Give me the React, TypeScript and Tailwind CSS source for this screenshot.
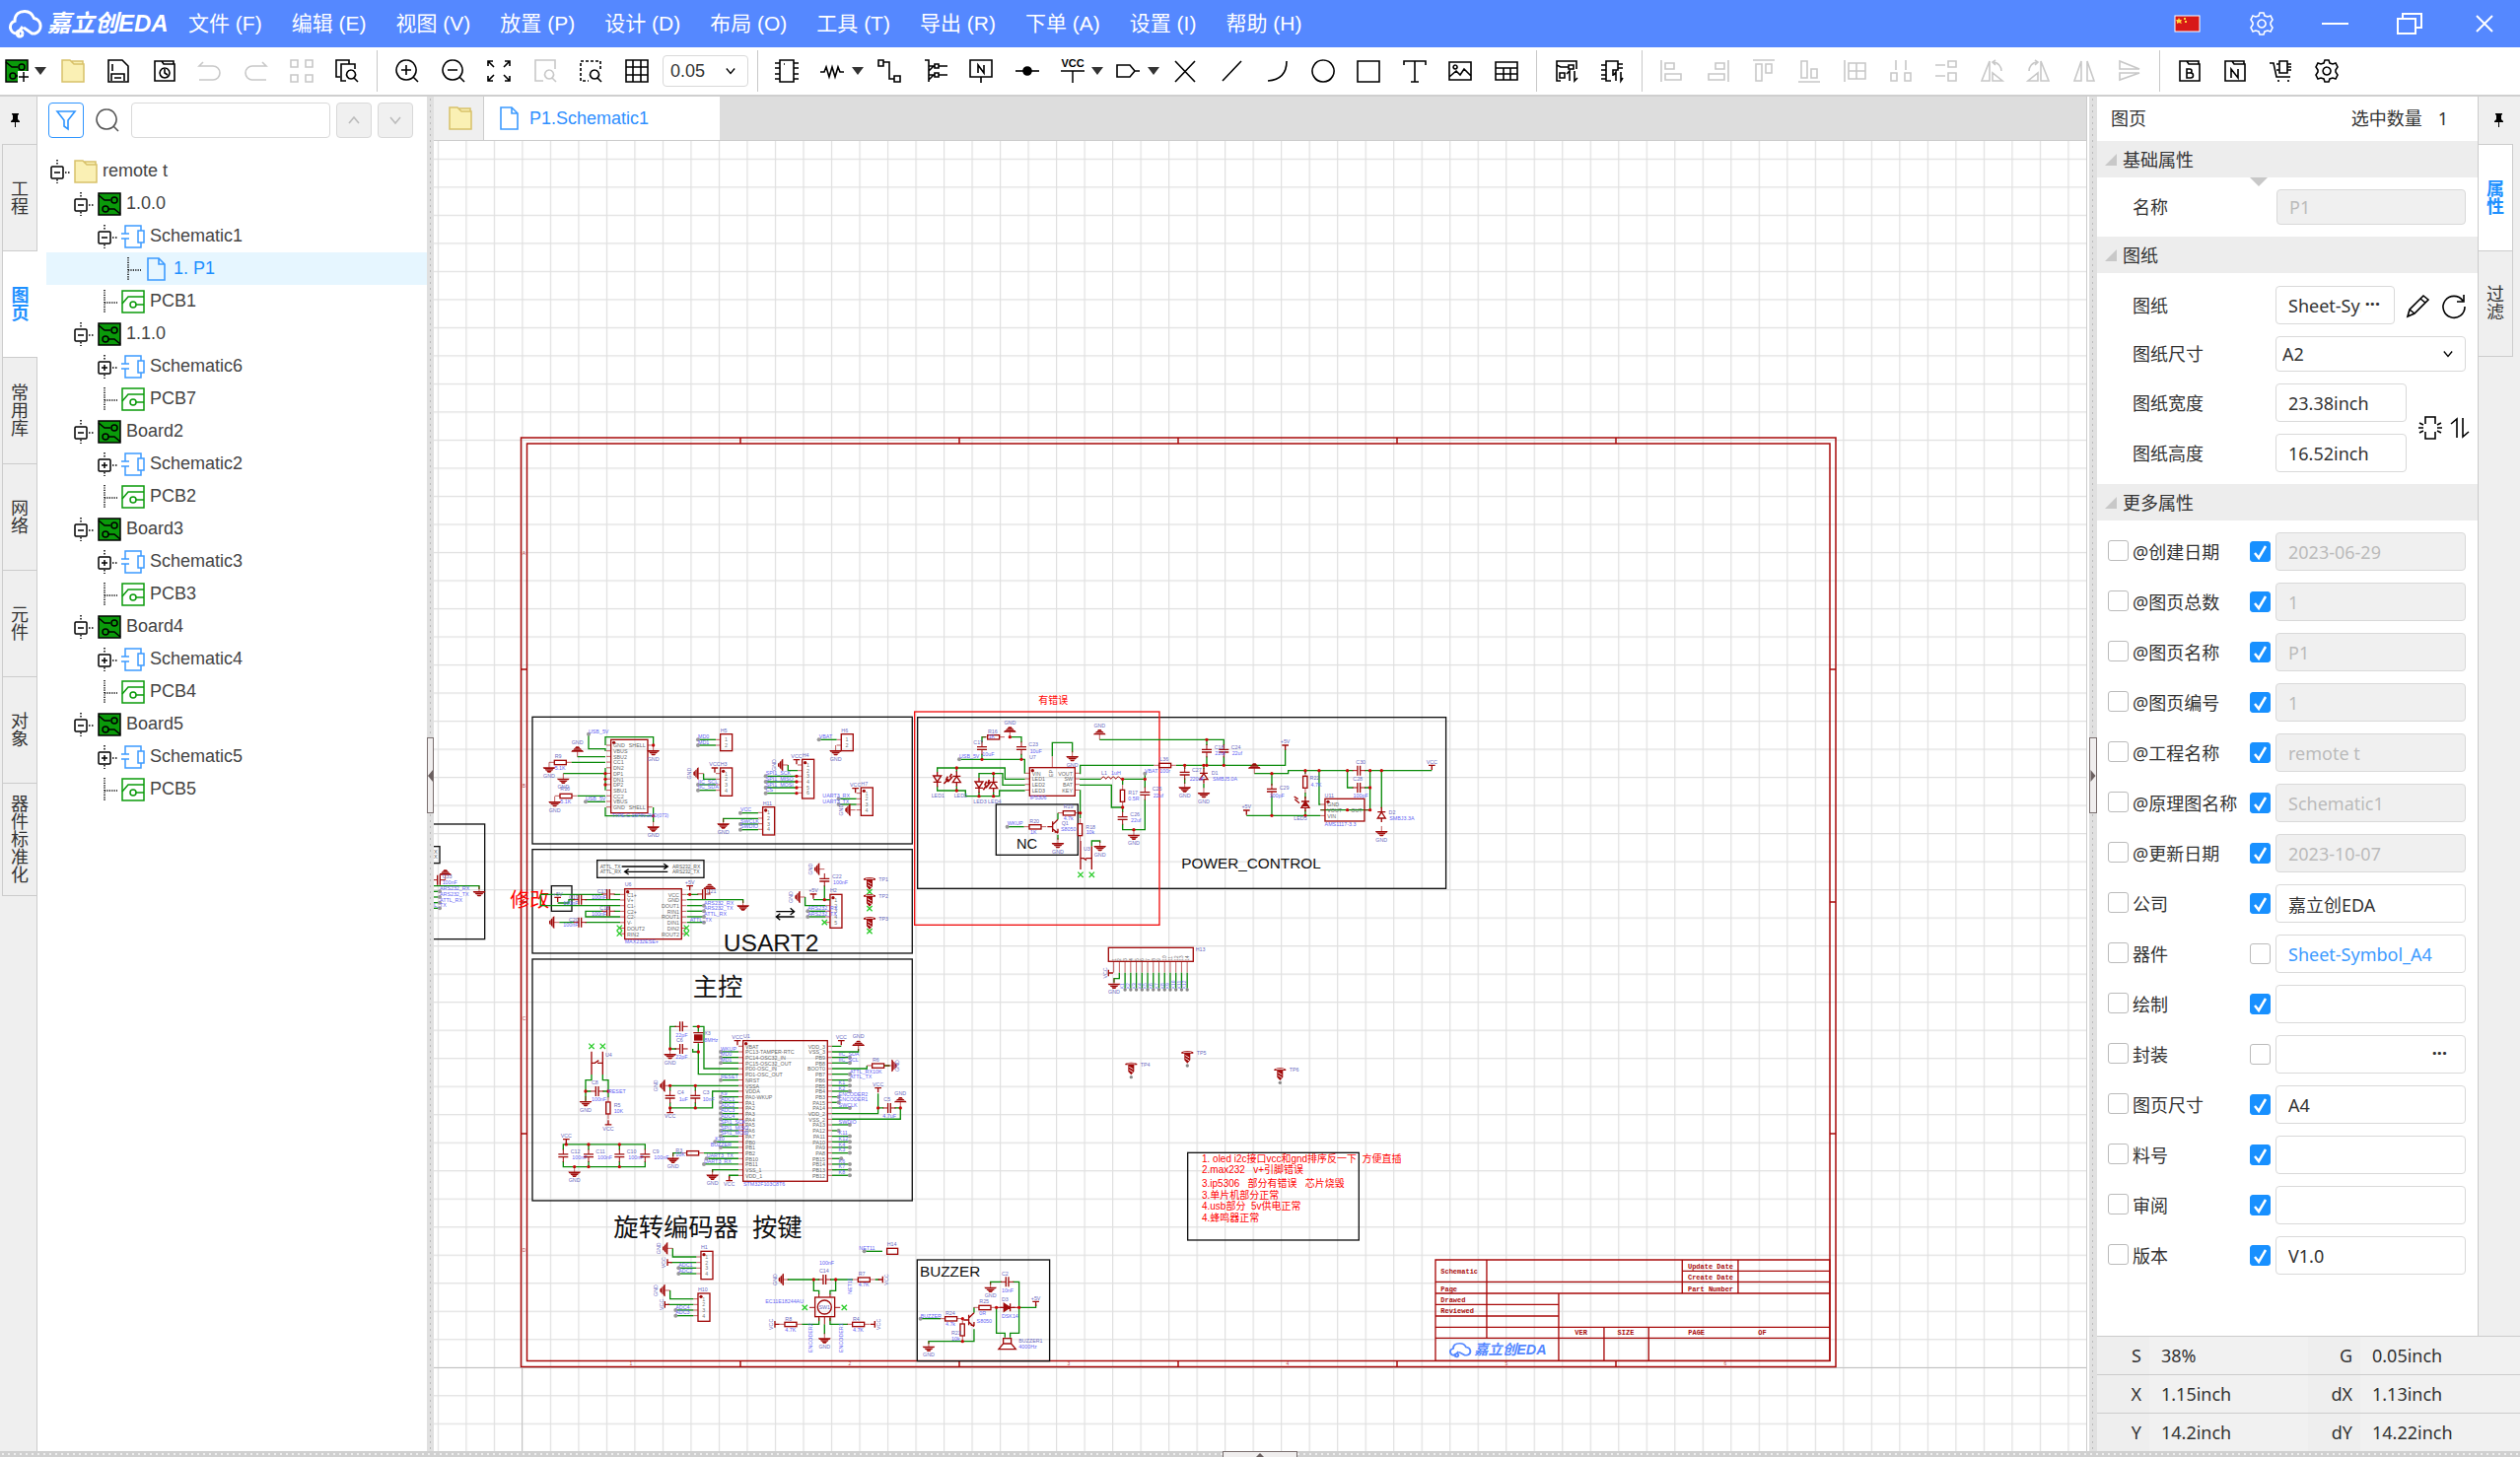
import type { ReactNode } from "react";

const SANS = "font-['Liberation_Sans','Noto_Sans_CJK_SC',sans-serif]";
const UI = "font-['Noto_Sans','Noto_Sans_CJK_SC',sans-serif]";

/* ---------- icons ---------- */

const ICONS: Record<string, string> = {
  save: "M2 1h14l6 6v16H2zM5 22v-7h13v7M6 5v7M8 19h7",
  history: "M2 2h7l2 3h11v17H2zM9 2h12v3M12 9a5 5 0 1 0 .1 0M12 10v4l3 2",
  undo: "M5 3L1 7h14a6.5 6.5 0 0 1 0 14H1",
  redo: "M19 3l4 4H9a6.5 6.5 0 0 0 0 14h14",
  tiles: "M1 1h7v7H1zM16 1h7v7h-7zM1 16h7v7H1zM16 16h7v7h-7z",
  find: "M14 5V1H1v17h4M11 22H6V5h14v5M16 11a4.5 4.5 0 1 0 .1 0M19 19l4 4",
  zoomIn: "M11 1a10 10 0 1 0 .1 0M18 18l5 5M11 6v10M6 11h10",
  zoomOut: "M11 1a10 10 0 1 0 .1 0M18 18l5 5M6 11h10",
  fit: "M1 7V2h5M1 2l6 6M18 2h5v5M23 2l-6 6M1 17v5h5M1 22l6-6M23 17v5h-5M23 22l-6-6",
  findPage: "M22 10V1H2v21h8M16 11a4.5 4.500 0 1 0 .1 0M19 19l4 4",
  grid: "M1 1h22v22H1zM8 1v22M16 1v22M1 8h22M1 16h22",
  chip: "M5 1h14v22H5zM5 4H0M5 9H0M5 15H0M5 20H0M19 4h5M19 9h5M19 15h5M19 20h5M9 5h1",
  resistor: "M0 13h4l2-5 3 10 3-10 3 10 3-10 2 5h4",
  wire: "M1 1h5v6H1zM17 17h6v6h-6zM6 3h6v17h5",
  bus: "M1 1h4v22M5 7h6M5 16h6M15 7h9M15 16h9M11 5h4v4h-4zM11 14h4v4h-4zM5 12l5-5M5 21l5-5",
  netN: "M1 1h22v17H1zM12 18v6M9 14V6l6 8V6",
  cross: "M2 2l20 21M22 2L2 23",
  line: "M3 22L22 2",
  arc: "M22 2c0 12-6 19-19 20",
  circle: "M12 1a11 11 0 1 0 .1 0",
  rect: "M1 2h22v21H1z",
  text: "M1 6V2h22v4M12 2v21M8 23h8",
  image: "M1 3h22v18H1zM1 18l7-6 4 4 4-6 7 7M7 6a2 2 0 1 0 .1 0",
  table: "M1 3h22v18H1zM1 9h22M1 15h22M9 9v12M16 9v12",
  tag: "M1 6h13l5 6-5 6H1zM19 12h5",
  toPcb: "M22 10V2H2v20h4M2 6l4 2h8M14 6h5v4h-5zM5 14h5v5H5zM15 22V12l-3 3M20 12v10l3-3",
  toSch: "M18 4V2H6v20h5M6 6H1M6 11H1M6 16H1M6 20H1M18 5h5M18 9h5M18 2v9h-5v6M16 22V13l-2 3M21 13v9l2-3",
  alignLeft: "M1 1v22M5 4h9v6H5zM5 15h16v6H5z",
  alignRight: "M23 1v22M10 4h9v6h-9zM3 15h16v6H3z",
  alignTop: "M1 1h22M4 5h6v17H4zM14 5h6v9h-6z",
  alignBottom: "M1 23h22M4 2h6v17H4zM14 10h6v9h-6z",
  alignGrid: "M1 1v22M5 4h17v16H5zM13 4v16M5 12h17",
  distH: "M7 1v10M17 1v10M2 14h6v8H2zM16 14h6v8h-6z",
  distV: "M1 6h10M1 17h10M14 2h8v6h-8zM14 14h8v8h-8z",
  rotL: "M9 2v20H1zM12 14v8h10zM12 3c6 0 9 5 9 9M15 1l-3 2 3 3",
  rotR: "M15 2v20h8zM12 14v8H2zM12 3C6 3 3 8 3 12M9 1l3 2-3 3",
  flipH: "M9 2v20H2zM15 2v20h7z",
  flipV: "M2 2v8h20zM2 21v-7h20z",
  folderB: "M2 2h7l2 3h11v17H2zM9 2h12v3M9 10v9h4a2 2 0 0 0 0-5H9h3a2 2 0 0 0 0-4z",
  folderN: "M2 2h7l2 3h11v17H2zM9 2h12v3M8 19v-9l7 9v-9",
  cart: "M0 4h4l3 14h14M10 2h8v12h-8zM10 5H7M10 11H7M18 5h4M18 8h4M18 11h4M9 21v2M19 21v2",
  gear: "M10 1h4l1 3 3 1 3-1 2 4-2 3v2l2 3-2 4-3-1-3 1-1 3h-4l-1-3-3-1-3 1-2-4 2-3v-2L1 8l2-4 3 1 3-1zM12 8a4 4 0 1 0 .1 0",
  filter: "M3 3h18l-7 9v9l-4-3v-6z",
  search: "M11 1a10 10 0 1 0 .1 0M18 18l5 5",
  up: "M7 15l5-6 5 6",
  down: "M7 9l5 6 5-6",
  page: "M3 1h11l6 6v16H3zM14 1v6h6",
  pencil: "M1 23l2-7L17 2l5 4L8 20zM3 16l5 4M14 5l5 4",
  reload: "M22 1v7h-7M21 7A11 11 0 1 0 23 13",
  lock: "M7 8V1h10v7M7 16v7h10v-7M0 12h5M19 12h5M1 7l4 2M1 17l4-2M23 7l-4 2M23 17l-4-2",
  swap: "M3 8l6-5v19M15 2v19l6-5",
};

function Icon({ name, size = "size-6", color = "text-black" }: { name: string; size?: string; color?: string }) {
  return (
    <svg viewBox="0 0 24 24" className={`${size} ${color} shrink-0 overflow-visible`} fill="none" stroke="currentColor" strokeWidth="1.6">
      <path d={ICONS[name]} />
    </svg>
  );
}

function Caret() {
  return (
    <svg viewBox="0 0 12 8" className="w-3 text-[#333]" fill="currentColor">
      <path d="M0 0h12l-6 8z" />
    </svg>
  );
}

function FolderIcon() {
  return (
    <svg viewBox="0 0 24 24" className="size-6 shrink-0" fill="#faf0b4" stroke="#d8c169" strokeWidth="1.5">
      <path d="M1 1h8l4 4h10v18H1zM10 2h12v3H13z" />
    </svg>
  );
}

function BoardIcon({ plus = false }: { plus?: boolean }) {
  return (
    <svg viewBox="0 0 24 24" className="size-6 shrink-0" fill="none" stroke="#000" strokeWidth="1.5">
      <rect x="1" y="1" width="22" height="22" fill="#0a9a0a" />
      <path d="M1 3l6 5h6M11 17h6l6 5" />
      <circle cx="17" cy="8" r="3" />
      <circle cx="8" cy="17" r="3" />
      {plus && <path d="M13 12h11v12H13z" fill="#fff" stroke="none" />}
      {plus && <path d="M19 13v10M14 18h10" />}
    </svg>
  );
}

function SchematicIcon() {
  return (
    <svg viewBox="0 0 24 24" className="size-6 shrink-0" fill="none" stroke="#3d9bff" strokeWidth="1.5">
      <path d="M4 9V1h16v5M4 14v9h16v-5M0 9h8M0 14h8" />
      <rect x="17" y="6" width="6" height="12" />
    </svg>
  );
}

function PcbIcon() {
  return (
    <svg viewBox="0 0 24 24" className="size-6 shrink-0" fill="none" stroke="#0a9a0a" strokeWidth="1.5">
      <rect x="1" y="1" width="22" height="22" />
      <path d="M1 14l6-7h16M15 15h8" />
      <circle cx="12" cy="15" r="3" />
    </svg>
  );
}

function Pin() {
  return (
    <svg viewBox="0 0 12 14" className="h-[14px] w-3" fill="#000">
      <path d="M2 0h7v1l-1 1v4l2 2v1H6v5H5V9H1V8l2-2V2L2 1z" />
    </svg>
  );
}

const CLOUD =
  "M11 24H8a6.5 6.5 0 0 1-2-12.7C6 4 11 1.5 16 1.5c5 0 8 3 9.5 7a8 8 0 0 1 1 15.5h-3L15 18M14 24a3 3 0 1 0 0 .1M11 21l3-4";

/* ---------- title bar and toolbar ---------- */

const menus = [
  "文件 (F)", "编辑 (E)", "视图 (V)", "放置 (P)", "设计 (D)", "布局 (O)",
  "工具 (T)", "导出 (R)", "下单 (A)", "设置 (I)", "帮助 (H)",
];

function TitleBar() {
  return (
    <header className="flex h-12 shrink-0 items-center bg-[#5588ff] pl-2 text-white">
      <svg viewBox="0 0 34 29" className="h-[29px] w-9" fill="none" stroke="currentColor" strokeWidth="3">
        <path d={CLOUD} />
      </svg>
      <span className="ml-1 w-[143px] text-[24px] font-bold whitespace-nowrap italic">嘉立创EDA</span>
      <nav className="flex gap-[30px] text-[21px]">
        {menus.map((menu) => (
          <button key={menu} className="whitespace-nowrap">
            {menu}
          </button>
        ))}
      </nav>
      <div className="ml-auto flex items-center pr-[27px]">
        <button aria-label="language" className="mr-[50px]">
          <svg viewBox="0 0 27 18" className="h-[18px] w-[27px]">
            <rect x="1" y="1" width="25" height="16" fill="#d81818" stroke="#fff" />
            <path d="M5 3l1 2h2L7 7l1 2-3-1-2 1V7L2 5h2zM10 3h2v2h-2zM11 6h2v2h-2z" fill="#ffd83d" />
          </svg>
        </button>
        <button aria-label="settings" className="mr-[49px]">
          <Icon name="gear" color="text-white" />
        </button>
        <button aria-label="minimize" className="mr-[49px] h-5">
          <svg viewBox="0 0 27 20" className="h-5 w-[27px]" stroke="#fff" strokeWidth="2">
            <path d="M0 10h27" />
          </svg>
        </button>
        <button aria-label="restore" className="mr-[54px]">
          <svg viewBox="0 0 26 22" className="h-[22px] w-[26px]" fill="none" stroke="#fff" strokeWidth="2">
            <path d="M1 6h18v15H1zM6 6V1h19v14h-6" />
          </svg>
        </button>
        <button aria-label="close">
          <svg viewBox="0 0 18 18" className="size-[18px]" stroke="#fff" strokeWidth="2">
            <path d="M1 1l16 16M17 1L1 17" />
          </svg>
        </button>
      </div>
    </header>
  );
}

function Tool({ name, disabled = false }: { name: string; disabled?: boolean }) {
  return (
    <button aria-label={name} disabled={disabled}>
      <Icon name={name} color={disabled ? "text-[#c8c8c8]" : "text-black"} />
    </button>
  );
}

function Tools({ names, className, disabled }: { names: string[]; className: string; disabled?: boolean }) {
  return (
    <div className={`flex shrink-0 justify-between ${className}`}>
      {names.map((name) => (
        <Tool key={name} name={name} disabled={disabled} />
      ))}
    </div>
  );
}

function Separator() {
  return <div className="mx-[18px] h-[42px] w-px shrink-0 bg-[#c8c8c8]" />;
}

function Toolbar() {
  return (
    <div className="flex h-[50px] shrink-0 items-center border-b-2 border-[#cfcfcf] bg-white pl-[5px]">
      <button aria-label="new" className="flex items-center gap-[6px]">
        <BoardIcon plus />
        <Caret />
      </button>
      <div className="ml-[15px] flex w-[302px] shrink-0 justify-between">
        <button aria-label="open">
          <FolderIcon />
        </button>
        <Tool name="save" />
        <Tool name="history" />
        <Tool name="undo" disabled />
        <Tool name="redo" disabled />
        <Tool name="tiles" disabled />
        <Tool name="find" />
      </div>
      <Separator />
      <div className="flex w-[257px] shrink-0 justify-between">
        <Tool name="zoomIn" />
        <Tool name="zoomOut" />
        <Tool name="fit" />
        <Tool name="findPage" disabled />
        <button aria-label="find area">
          <svg viewBox="0 0 24 24" className="size-6" fill="none" stroke="#000" strokeWidth="1.6">
            <path d="M22 10V2H2v20h8" strokeDasharray="3 2" />
            <path d="M16 11a4.5 4.5 0 1 0 .1 0M19 19l4 4" />
          </svg>
        </button>
        <Tool name="grid" />
      </div>
      <div className="ml-[14px] grid shrink-0 items-center">
        <select
          aria-label="grid size"
          className="col-start-1 row-start-1 h-8 w-[87px] appearance-none rounded-sm border border-[#d9d9d9] pl-[7px] text-lg leading-none text-[#333]"
        >
          <option>0.05</option>
        </select>
        <div className="pointer-events-none col-start-1 row-start-1 mr-2 justify-self-end">
          <Icon name="down" size="size-5" />
        </div>
      </div>
      <div className="mr-[17px] ml-[9px] h-[42px] w-px shrink-0 bg-[#c8c8c8]" />
      <Tools names={["chip", "resistor"]} className="mr-2 w-[70px]" />
      <Caret />
      <div className="mr-[7px] ml-[14px] flex w-[210px] shrink-0 justify-between">
        <Tool name="wire" />
        <Tool name="bus" />
        <Tool name="netN" />
        <button aria-label="junction">
          <svg viewBox="0 0 24 24" className="size-6" stroke="#000" strokeWidth="1.6">
            <path d="M0 12h24" />
            <circle cx="12" cy="12" r="4" />
          </svg>
        </button>
        <button aria-label="power">
          <svg viewBox="0 0 24 24" className="size-6 overflow-visible" stroke="#000" strokeWidth="1.5">
            <path d="M0 12h24M12 12v12" />
            <text x="12" y="8" textAnchor="middle" className="text-[11px] font-bold" stroke="none">VCC</text>
          </svg>
        </button>
      </div>
      <Caret />
      <div className="mr-2 ml-[13px] flex">
        <Tool name="tag" />
      </div>
      <Caret />
      <Tools
        names={["cross", "line", "arc", "circle", "rect", "text", "image", "table"]}
        className="ml-[14px] w-[350px]"
      />
      <Separator />
      <Tools names={["toPcb", "toSch"]} className="w-[70px]" />
      <Separator />
      <Tools
        names={[
          "alignLeft", "alignRight", "alignTop", "alignBottom", "alignGrid", "distH", "distV", "rotL", "rotR", "flipH", "flipV",
        ]}
        className="w-[488px]"
        disabled
      />
      <Separator />
      <Tools names={["folderB", "folderN", "cart", "gear"]} className="w-[163px]" />
    </div>
  );
}

/* ---------- left side ---------- */

const leftTabs = ["工程", "图页", "常用库", "网络", "元件", "对象", "器件标准化"];

function LeftTabs() {
  return (
    <div className="flex w-[38px] shrink-0 flex-col bg-[#efefef]">
      <div className="flex h-12 items-center justify-center border-r border-[#ccc] pr-[6px]">
        <Pin />
      </div>
      <div className="ml-[2px] flex flex-col">
        {leftTabs.map((tab) => (
          <button
            key={tab}
            className={`flex h-[108px] items-center justify-center border-t border-l border-[#ccc] text-lg leading-[18px] last:h-[115px] last:border-b ${
              tab === "图页" ? "bg-white font-bold text-[#1e90ff]" : "border-r text-[#333]"
            }`}
          >
            <span className="w-[18px] break-all">{tab}</span>
          </button>
        ))}
      </div>
      <div className="flex-1 border-r border-[#ccc]" />
    </div>
  );
}

type Row = { level: number; kind: "folder" | "board" | "sch" | "page" | "pcb"; name: string; open?: boolean };

const tree: Row[] = [
  { level: 0, kind: "folder", name: "remote t", open: true },
  { level: 1, kind: "board", name: "1.0.0", open: true },
  { level: 2, kind: "sch", name: "Schematic1", open: true },
  { level: 3, kind: "page", name: "1. P1" },
  { level: 2, kind: "pcb", name: "PCB1" },
  { level: 1, kind: "board", name: "1.1.0", open: true },
  { level: 2, kind: "sch", name: "Schematic6", open: false },
  { level: 2, kind: "pcb", name: "PCB7" },
  { level: 1, kind: "board", name: "Board2", open: true },
  { level: 2, kind: "sch", name: "Schematic2", open: false },
  { level: 2, kind: "pcb", name: "PCB2" },
  { level: 1, kind: "board", name: "Board3", open: true },
  { level: 2, kind: "sch", name: "Schematic3", open: false },
  { level: 2, kind: "pcb", name: "PCB3" },
  { level: 1, kind: "board", name: "Board4", open: true },
  { level: 2, kind: "sch", name: "Schematic4", open: false },
  { level: 2, kind: "pcb", name: "PCB4" },
  { level: 1, kind: "board", name: "Board5", open: true },
  { level: 2, kind: "sch", name: "Schematic5", open: false },
  { level: 2, kind: "pcb", name: "PCB5" },
];

const indents = ["pl-0", "pl-6", "pl-12", "pl-18"];

function Toggle({ open }: { open?: boolean }) {
  return (
    <svg viewBox="0 0 24 24" className="size-6 shrink-0" fill="none" stroke="#000" strokeWidth="1.5">
      {open === undefined ? (
        <path d="M11 0v24M11 13h13" strokeDasharray="1.2 1.2" />
      ) : (
        <>
          <path d="M11 0v5M11 20v4M19 13h6" strokeDasharray="1.5 1.5" />
          <rect x="5" y="7" width="12" height="12" rx="1" />
          <path d={open ? "M8 13h6" : "M8 13h6M11 10v6"} />
        </>
      )}
    </svg>
  );
}

function TreeRow({ row }: { row: Row }) {
  const active = row.kind === "page";
  return (
    <li className={active ? "bg-[#e6f6ff]" : ""}>
      <button className={`flex h-[33px] items-center ${indents[row.level]}`}>
        <Toggle open={row.open} />
        <span className="mr-[5px] ml-1 flex w-6 justify-center">
          {row.kind === "folder" && <FolderIcon />}
          {row.kind === "board" && <BoardIcon />}
          {row.kind === "sch" && <SchematicIcon />}
          {row.kind === "pcb" && <PcbIcon />}
          {row.kind === "page" && <Icon name="page" color="text-[#3d9bff]" />}
        </span>
        <span className={`pb-[2px] text-lg ${active ? "text-[#1e90ff]" : "text-[#444]"}`}>{row.name}</span>
      </button>
    </li>
  );
}

function ProjectPanel() {
  return (
    <aside className="w-[395px] shrink-0 bg-white">
      <div className="flex items-center pt-[6px] pr-[14px] pl-[11px]">
        <button aria-label="filter" className="flex size-9 items-center justify-center rounded-sm border border-[#2f95ff]">
          <Icon name="filter" color="text-[#2f95ff]" />
        </button>
        <div className="mx-3">
          <Icon name="search" color="text-[#555]" />
        </div>
        <input aria-label="search" className="h-9 min-w-0 flex-1 rounded-sm border border-[#d9d9d9]" />
        <button aria-label="previous" className="ml-[6px] flex size-9 items-center justify-center rounded-sm border border-[#d9d9d9] bg-[#f0f0f0]">
          <Icon name="up" color="text-[#bbb]" />
        </button>
        <button aria-label="next" className="ml-[6px] flex size-9 items-center justify-center rounded-sm border border-[#d9d9d9] bg-[#f0f0f0]">
          <Icon name="down" color="text-[#bbb]" />
        </button>
      </div>
      <ul className="mt-[17px] ml-[9px]">
        {tree.map((row) => (
          <TreeRow key={row.name} row={row} />
        ))}
      </ul>
    </aside>
  );
}

function Splitter({ side }: { side: "left" | "right" }) {
  return (
    <div
      className={`flex shrink-0 flex-col items-center bg-[#e0e0e0] bg-[radial-gradient(#bbb_1px,transparent_1px)] bg-[size:7px_6px] pt-[650px] ${
        side === "left" ? "w-[7px]" : "w-2"
      }`}
    >
      <button aria-label="collapse panel" className="flex h-[77px] w-full items-center border border-[#7a6f6f] bg-[#f0eeee]">
        <svg viewBox="0 0 5 12" className="h-3 w-full" fill="#6b6060">
          <path d={side === "left" ? "M5 0v12L0 6z" : "M0 0v12l5-6z"} />
        </svg>
      </button>
    </div>
  );
}

/* ---------- schematic symbols, drawn at three units per pixel ---------- */

const RED = "#a00a0a";
const GREEN = "#0a8a0a";
const NET = "#6464f4";
const REF = "#6a6abf";

type Pos = { x: number; y: number };

function T({ x, y, s, c = REF, size = 16, a = "start", r = 0 }: Pos & { s: string; c?: string; size?: number; a?: "start" | "middle" | "end"; r?: number }) {
  return (
    <text x={x} y={y} fill={c} fontSize={size} textAnchor={a} transform={r ? `rotate(${r} ${x} ${y})` : undefined}>
      {s}
    </text>
  );
}

function Wire({ d, c = GREEN, w = 4 }: { d: string; c?: string; w?: number }) {
  return <path d={d} fill="none" stroke={c} strokeWidth={w} />;
}

function Gnd({ x, y, r = 0, label = true }: Pos & { r?: number; label?: boolean }) {
  const at = { 0: [0, 47], 90: [-37, 0], 180: [0, -38], 270: [37, 0] }[r] ?? [0, 47];
  return (
    <g>
      <g transform={`translate(${x} ${y}) rotate(${r})`}>
        <Wire d="M0 0v16" c={RED} w={2} />
        <path d="M-19 15h38l-3 5h-32zM-13 21h26l-3 4h-20zM-8 26h16l-4 5h-8z" fill={RED} />
      </g>
      {label && <T x={x + at[0]} y={y + at[1]} s="GND" a="middle" r={r % 180 ? 270 : 0} />}
    </g>
  );
}

function Vcc({ x, y, s = "VCC", r = 0 }: Pos & { s?: string; r?: number }) {
  const at = { 0: [0, -19], 90: [31, 0], 180: [0, 31], 270: [-19, 0] }[r] ?? [0, -19];
  return (
    <g>
      <g transform={`translate(${x} ${y}) rotate(${r})`}>
        <Wire d="M0 0v-14M-10 -14h20" c={RED} w={4} />
      </g>
      <T x={x + at[0]} y={y + at[1]} s={s} a="middle" r={r % 180 ? 270 : 0} />
    </g>
  );
}

function Res({ x, y, r = 0 }: Pos & { r?: number }) {
  return (
    <g transform={`translate(${x} ${y}) rotate(${r})`}>
      <Wire d="M-34 0h16M18 0h16" c={RED} w={2} />
      <rect x="-18" y="-6" width="36" height="13" fill="none" stroke={RED} strokeWidth="4" />
    </g>
  );
}

/* plates are horizontal unless rotated */
function Cap({ x, y, r = 0 }: Pos & { r?: number }) {
  return (
    <g transform={`translate(${x} ${y}) rotate(${r})`}>
      <Wire d="M0 -20v16M0 4v16" c={RED} w={3} />
      <Wire d="M-15 -4h30M-15 4h30" c={RED} w={4} />
    </g>
  );
}

function Led({ x, y, r = 0 }: Pos & { r?: number }) {
  return (
    <g transform={`translate(${x} ${y}) rotate(${r})`} fill="none" stroke={RED} strokeWidth="4">
      <path d="M0 -22v12M0 8v16M-12 -10h24L0 8zM-12 9h24" />
    </g>
  );
}

function Npn({ x, y }: Pos) {
  return <Wire d={`M${x - 16} ${y}h14M${x} ${y - 16}v32M${x} ${y - 6}l16-16M${x} ${y + 6}l16 14M${x + 6} ${y + 16}h10v-10`} c={RED} />;
}

function Dots({ at, c = "#c80a0a", r = 5 }: { at: number[][]; c?: string; r?: number }) {
  return (
    <>
      {at.map(([x, y]) => (
        <circle key={`${x}-${y}`} cx={x} cy={y} r={r} fill={c} />
      ))}
    </>
  );
}

function Open({ x, y }: Pos) {
  return <Wire d={`M${x - 8} ${y - 8}l16 16M${x + 8} ${y - 8}l-16 16`} c="#2ccc2c" />;
}

type NetRow = [x: number, y: number, to: number, name: string];

function Nets({ rows }: { rows: NetRow[] }) {
  return (
    <>
      {rows.map(([x, y, to, name]) => (
        <g key={`${x}-${y}`}>
          <Wire d={`M${x} ${y}H${to}`} />
          <circle cx={x} cy={y} r="6" fill="#999" />
          <T x={to > x ? x : x - 34} y={y - 4} s={name} c={NET} />
        </g>
      ))}
    </>
  );
}

function Header({ x, y, n, name }: Pos & { n: number; name: string }) {
  return (
    <g>
      <rect x={x} y={y} width="36" height={n * 17 + 17} fill="none" stroke={RED} strokeWidth="4" />
      {Array.from({ length: n }, (_, i) => (
        <g key={i}>
          <Wire d={`M${x - 14} ${y + 17 + i * 17}h14`} c={RED} w={2} />
          <T x={x + 13} y={y + 23 + i * 17} s={`${i + 1}`} c="#777" />
        </g>
      ))}
      {n > 2 && <circle cx={x + 9} cy={y + 10} r="5" fill={RED} />}
      <T x={x} y={y - 6} s={name} />
    </g>
  );
}

type ChipProps = Pos & { w: number; h: number; top?: number; left: string[]; right: string[] };

function Chip({ x, y, w, h, top = 17, left, right }: ChipProps) {
  const rowY = (i: number) => y + top + i * 17.1;
  return (
    <g>
      <rect x={x} y={y} width={w} height={h} fill="none" stroke={RED} strokeWidth="4" />
      <circle cx={x + 9} cy={y + 9} r="5" fill={RED} />
      {left.map((pin, i) =>
        pin ? (
          <g key={i}>
            <Wire d={`M${x - 14} ${rowY(i)}h14`} c={RED} w={2} />
            <T x={x + 7} y={rowY(i) + 7} s={pin} c="#666" />
          </g>
        ) : null,
      )}
      {right.map((pin, i) =>
        pin ? (
          <g key={i}>
            <Wire d={`M${x + w} ${rowY(i)}h14`} c={RED} w={2} />
            <T x={x + w - 7} y={rowY(i) + 7} s={pin} c="#666" a="end" />
          </g>
        ) : null,
      )}
    </g>
  );
}

function TestPoint({ x, y, name, open = false }: Pos & { name: string; open?: boolean }) {
  return (
    <g>
      <path d={`M${x - 18} ${y - 12}q18 -8 36 0v4h-9v20l-9 10l-9 -10v-20h-9z`} fill={RED} />
      <Wire d={`M${x - 6} ${y - 2}l12 7M${x - 6} ${y + 7}l12 7M${x - 12} ${y - 12}h24`} c="#f4dada" w={3} />
      {open ? <Open x={x} y={y + 28} /> : <circle cx={x} cy={y + 29} r="5" fill="#888" />}
      <T x={x + 28} y={y - 4} s={name} />
    </g>
  );
}

function Frame({ x, y, w, h, c = "#111" }: Pos & { w: number; h: number; c?: string }) {
  return <rect x={x} y={y} width={w} height={h} fill="none" stroke={c} strokeWidth="4" />;
}

function UsbBlock() {
  return (
    <g>
      <Frame x={330} y={82} w={1156} h={386} />
      <Chip
        x={569} y={151} w={112} h={223}
        left={["GND", "VBUS", "SBU2", "CC1", "DN2", "DP1", "DN1", "DP2", "SBU1", "CC2", "VBUS", "GND"]}
        right={["SHELL", "", "", "", "", "", "", "", "", "", "", "SHELL"]}
      />
      <Wire d="M501 134V179H552V186M552 168V143H698V168M467 203H552M449 220H552M424 254H552M552 237V305M467 322H552M552 357V383H698V357M698 383V402" />
      <Dots at={[[552, 254], [552, 271], [552, 288], [698, 168], [698, 383]]} />
      <Nets rows={[[492, 340, 552, "USB_5V"]]} />
      <Dots at={[[501, 134]]} c="#999" r={6} />
      <T x={501} y={132} s="USB_5V" c={NET} />
      <T x={572} y={387} s="TYPE-C-16PIN-2MD(073)" c={NET} size={15} />
      <Gnd x={467} y={203} r={180} />
      <Gnd x={381} y={220} />
      <Gnd x={424} y={254} />
      <Gnd x={398} y={324} />
      <Gnd x={698} y={168} />
      <Gnd x={698} y={400} />
      <Res x={415} y={220} />
      <Res x={432} y={322} />
      <T x={398} y={208} s="R9" />
      <T x={398} y={243} s="5.1K" c={NET} />
      <T x={415} y={306} s="R10" />
      <T x={415} y={345} s="5.1K" c={NET} />
      <Header x={902} y={134} n={2} name="H5" />
      <Nets rows={[[834, 151, 888, "MD0"], [834, 168, 888, "MD1"]]} />
      <Header x={902} y={237} n={4} name="H3" />
      <Nets rows={[[834, 288, 888, "IIC_SCL"], [834, 305, 888, "IIC_SDA"]]} />
      <Wire d="M851 254V271H888" />
      <Gnd x={851} y={254} r={90} />
      <Vcc x={885} y={251} />
      <Header x={1151} y={211} n={6} name="H4" />
      <Nets rows={[[1040, 262, 1137, "SPI1_SCK"], [1040, 279, 1137, "SPI1_MISO"], [1040, 297, 1137, "SPI1_MOSI"], [1040, 314, 1137, "CS"]]} />
      <Dots at={[[1134, 262], [1134, 279], [1134, 297], [1134, 314]]} />
      <Wire d="M1108 228V245H1137" />
      <Gnd x={1108} y={228} r={90} />
      <Vcc x={1134} y={226} />
      <Header x={1270} y={134} n={2} name="H6" />
      <Nets rows={[[1202, 151, 1256, "VBAT"]]} />
      <Gnd x={1253} y={168} />
      <Header x={1330} y={297} n={4} name="H7" />
      <Nets rows={[[1262, 331, 1316, ""], [1262, 348, 1316, ""]]} />
      <T x={1213} y={327} s="UART3_RX" c={NET} />
      <T x={1213} y={344} s="UART3_TX" c={NET} />
      <Gnd x={1313} y={365} r={90} />
      <Vcc x={1313} y={313} />
      <Header x={1031} y={356} n={4} name="H11" />
      <Nets rows={[[963, 374, 1017, "VCC"], [963, 408, 1017, "SWCLK"], [963, 425, 1017, "SWDIO"]]} />
      <Wire d="M911 402V391H1017" />
      <Gnd x={911} y={391} />
    </g>
  );
}

function UsartBlock() {
  return (
    <g>
      <Frame x={330} y={485} w={1156} h={316} />
      <Frame x={527} y={518} w={325} h={53} />
      <T x={536} y={543} s="ATTL_TX" c="#555" size={15} />
      <T x={536} y={558} s="ATTL_RX" c="#555" size={15} />
      <T x={756} y={543} s="ARS232_RX" c="#555" size={15} />
      <T x={756} y={558} s="ARS232_TX" c="#555" size={15} />
      <Wire d="M602 537H742M730 529l12 8l-12 8M742 553H611M623 545l-12 8l12 8" c="#000" />
      <Wire d="M1072 674H1127M1115 664l12 10l-12 10M1127 690H1072M1084 680l-12 10l12 10" c="#000" />
      <Frame x={388} y={596} w={62} h={77} />
      <T x={262} y={660} s="修改" c="#f00" size={60} />
      <Chip
        x={611} y={605} w={173} h={153}
        left={["C1+", "V+", "C1-", "C2+", "C2-", "V-", "DOUT2", "RIN2"]}
        right={["VCC", "GND", "DOUT1", "RIN1", "ROUT1", "DIN1", "DIN2", "ROUT2"]}
      />
      <T x={611} y={596} s="U6" />
      <T x={611} y={770} s="MAX232ESE+" c={NET} />
      <Wire d="M355 622H545M355 622V656H597M578 622H597M407 648H441V638H458M490 638H597M578 673H597M545 673H492V690H597M412 707H458M490 707H597M800 622H835M800 638H971V648" />
      <Cap x={561} y={621} r={90} />
      <Cap x={475} y={638} r={90} />
      <Cap x={561} y={673} r={90} />
      <Cap x={475} y={707} r={90} />
      <Cap x={852} y={621} r={90} />
      <T x={527} y={617} s="C17" />
      <T x={510} y={636} s="100nF" c={NET} />
      <T x={441} y={636} s="C19" />
      <T x={424} y={653} s="100nF" c={NET} />
      <T x={535} y={669} s="C18" />
      <T x={510} y={687} s="100nF" c={NET} />
      <T x={441} y={705} s="C20" />
      <T x={424} y={720} s="100nF" c={NET} />
      <T x={860} y={617} s="C21" />
      <Gnd x={412} y={707} r={90} label={false} />
      <Gnd x={869} y={621} r={180} label={false} />
      <Gnd x={971} y={640} label={false} />
      <Vcc x={407} y={645} s="+5V" />
      <Vcc x={809} y={610} s="+5V" />
      <Dots at={[[809, 622]]} />
      <Nets rows={[[852, 656, 800, ""], [852, 673, 800, ""], [852, 690, 800, ""], [852, 707, 800, ""]]} />
      <T x={852} y={655} s="ARS232_RX" c={NET} />
      <T x={852} y={669} s="ARS232_TX" c={NET} />
      <T x={852} y={687} s="ATTL_RX" c={NET} />
      <T x={809} y={705} s="ATTL_TX" c={NET} />
      <Open x={595} y={724} />
      <Open x={595} y={741} />
      <Open x={799} y={724} />
      <Open x={799} y={741} />
      <Header x={1236} y={622} n={5} name="H2" />
      <Wire d="M1219 595V638H1236M1160 630V656H1222M1185 638H1219" />
      <Dots at={[[1219, 638]]} />
      <Cap x={1219} y={578} />
      <T x={1242} y={572} s="C22" />
      <T x={1245} y={592} s="100nF" c={NET} />
      <Gnd x={1219} y={545} r={90} />
      <Gnd x={1160} y={630} r={90} />
      <Vcc x={1185} y={635} s="+5V" />
      <Nets rows={[[1168, 673, 1222, "ARS232_RX"], [1168, 690, 1222, "ARS232_TX"]]} />
      <Open x={1219} y={707} />
      <TestPoint x={1356} y={586} name="TP1" open />
      <TestPoint x={1356} y={637} name="TP2" open />
      <TestPoint x={1356} y={706} name="TP3" open />
      <T x={911} y={794} s="USART2" c="#111" size={74} />
    </g>
  );
}

const leftNets: NetRow[] = [
  [903, 1101, 957, "WKUP"], [903, 1118, 957, "MD0"], [903, 1135, 957, "MD1"], [903, 1187, 957, "RESET"],
  [903, 1238, 957, "K9"], [903, 1255, 957, "ADC1"], [903, 1272, 957, "ADC2"], [903, 1289, 957, "ADC3"],
  [903, 1306, 957, "ADC4"], [903, 1323, 957, "SPI1_SCK"], [903, 1341, 957, "SPI1_MISO"], [903, 1358, 957, "SPI1_MOSI"],
  [886, 1375, 957, "K10"], [903, 1392, 957, ""], [860, 1426, 957, "UART3_TX"], [852, 1443, 957, "UART3_RX"],
];

const rightNets: NetRow[] = [
  [1296, 1118, 1242, "IIC_SDA"], [1296, 1135, 1242, "IIC_SCL"], [1296, 1169, 1242, ""], [1296, 1187, 1242, ""],
  [1296, 1204, 1242, "K1"], [1296, 1221, 1242, "K2"], [1262, 1238, 1242, ""], [1262, 1255, 1242, ""],
  [1296, 1272, 1242, "SWCLK"], [1296, 1323, 1242, "SWDIO"], [1262, 1341, 1242, ""], [1296, 1358, 1242, "K11"],
  [1296, 1375, 1242, "K12"], [1296, 1392, 1242, "K4"], [1296, 1409, 1242, "K3"], [1270, 1426, 1242, ""],
  [1296, 1443, 1242, "K6"], [1296, 1460, 1242, "K7"], [1296, 1477, 1242, "K8"],
];

function McuBlock() {
  return (
    <g>
      <Frame x={330} y={819} w={1156} h={735} />
      <T x={818} y={931} s="主控" c="#111" size={76} />
      <Chip
        x={971} y={1067} w={257} h={428}
        left={[
          "VBAT", "PC13-TAMPER-RTC", "PC14-OSC32_IN", "PC15-OSC32_OUT", "PD0-OSC_IN", "PD1-OSC_OUT", "NRST", "VSSA",
          "VDDA", "PA0-WKUP", "PA1", "PA2", "PA3", "PA4", "PA5", "PA6", "PA7", "PB0", "PB1", "PB2", "PB10", "PB11", "VSS_1", "VDD_1",
        ]}
        right={[
          "VDD_3", "VSS_3", "PB9", "PB8", "BOOT0", "PB7", "PB6", "PB5", "PB4", "PB3", "PA15", "PA14", "VDD_2", "VSS_2",
          "PA13", "PA12", "PA11", "PA10", "PA9", "PA8", "PB15", "PB14", "PB13", "PB12",
        ]}
      />
      <T x={972} y={1058} s="U1" />
      <T x={972} y={1508} s="STM32F103C8T6" c={NET} />
      <Nets rows={leftNets} />
      <Nets rows={rightNets} />
      <T x={872} y={1389} s="BUZZER" c={NET} />
      <T x={1296} y={1166} s="ATTL_RX" c={NET} />
      <T x={1296} y={1182} s="ATTL_TX" c={NET} />
      <T x={1262} y={1236} s="ENCODER2" c={NET} />
      <T x={1262} y={1250} s="ENCODER1" c={NET} />
      <Vcc x={954} y={1081} />
      <Vcc x={1270} y={1081} />
      <Wire d="M1242 1084H1270M1242 1101H1322V1092M1242 1152H1348V1143M1400 1143H1418" />
      <Gnd x={1322} y={1098} r={180} />
      <Res x={1382} y={1143} />
      <T x={1365} y={1131} s="R6" />
      <T x={1365} y={1166} s="10K" c={NET} />
      <Gnd x={1408} y={1143} r={270} />
      <Wire d="M1242 1289H1382V1228M1242 1306H1450V1272M1382 1272H1399M1432 1272H1450" />
      <Cap x={1416} y={1272} r={90} />
      <Vcc x={1382} y={1225} />
      <Gnd x={1450} y={1270} r={180} />
      <T x={1399} y={1250} s="C5" />
      <T x={1396} y={1302} s="4.7uF" c={NET} />
      <Dots at={[[1382, 1272], [1450, 1272]]} />

      <Wire d="M749 1092V1024H768M818 1024H852V1152H957M749 1092H768M818 1092V1101H835V1169H957M835 1101V1075M835 1024V1040" />
      <Cap x={783} y={1024} r={90} />
      <Cap x={783} y={1092} r={90} />
      <rect x="822" y="1048" width="26" height="19" fill={RED} />
      <Wire d="M820 1043h30M820 1072h30" c={RED} />
      <Dots at={[[835, 1024], [749, 1092], [835, 1101]]} />
      <T x={766} y={1056} s="22pF" c={NET} />
      <T x={768} y={1071} s="C6" />
      <T x={766} y={1122} s="22pF" c={NET} />
      <T x={853} y={1050} s="X3" />
      <T x={853} y={1071} s="8MHz" c={NET} />
      <Gnd x={749} y={1092} />

      <Wire d="M749 1204H957M749 1220V1204M826 1204V1220M749 1255V1272H878V1221H957M826 1255V1272" />
      <Cap x={749} y={1238} />
      <Cap x={826} y={1238} />
      <Dots at={[[749, 1204], [826, 1204], [749, 1272], [826, 1272]]} />
      <Gnd x={749} y={1204} r={90} />
      <Vcc x={749} y={1272} r={180} />
      <T x={771} y={1229} s="C4" />
      <T x={776} y={1250} s="1uF" c={NET} />
      <T x={848} y={1229} s="C3" />
      <T x={848} y={1250} s="10nF" c={NET} />

      <Res x={818} y={1409} />
      <Wire d="M758 1419V1409H784M852 1409H957M878 1468V1460H957M929 1485V1477H957" />
      <T x={766} y={1407} s="R3" />
      <T x={766} y={1419} s="10K" c={NET} />
      <Gnd x={758} y={1409} />
      <Gnd x={878} y={1460} />
      <Vcc x={929} y={1479} r={180} />

      <Open x={510} y={1084} />
      <Open x={544} y={1084} />
      <Wire d="M510 1100V1170M544 1100V1170M510 1135h10l12-8M528 1135h16" c={RED} />
      <Wire d="M510 1170V1187H492V1250M544 1170V1187H561V1240M492 1221H508M544 1221H561" />
      <Cap x={527} y={1221} r={90} />
      <Res x={561} y={1272} r={90} />
      <Gnd x={492} y={1236} />
      <Vcc x={561} y={1309} r={180} />
      <Dots at={[[492, 1221], [561, 1221]]} />
      <T x={552} y={1115} s="U4" />
      <T x={510} y={1200} s="C8" />
      <T x={510} y={1250} s="100nF" c={NET} />
      <T x={561} y={1227} s="RESET" c={NET} />
      <T x={578} y={1268} s="R5" />
      <T x={578} y={1286} s="10K" c={NET} />

      <Wire d="M424 1400V1383H673V1400M501 1383V1400M595 1383V1400M424 1434V1451H673V1434M501 1434V1451M595 1434V1451" />
      {[424, 501, 595, 673].map((x, i) => (
        <g key={x}>
          <Cap x={x} y={1417} />
          <T x={x + 22} y={1409} s={["C12", "C11", "C10", "C9"][i]} />
          <T x={x + 27} y={1429} s="100nF" c={NET} />
        </g>
      ))}
      <Dots at={[[433, 1383], [501, 1383], [595, 1383], [458, 1451], [501, 1451], [595, 1451]]} />
      <Vcc x={433} y={1381} />
      <Gnd x={458} y={1451} />
    </g>
  );
}

function PowerBlock() {
  return (
    <g>
      <Frame x={92} y={143} w={1608} h={521} />
      <Frame x={83} y={126} w={745} h={649} c="#f01010" />
      <Frame x={331} y={408} w={249} h={154} />
      <T x={460} y={103} s="有错误" c="#f00" size={30} />
      <T x={393} y={542} s="NC" c="#111" size={44} />
      <T x={895} y={602} s="POWER_CONTROL" c="#111" size={46} />
      <Wire d="M219 271H418V314M288 220V203H300M373 203H408V220M288 254V271M408 254V271M502 262V220H563V250" />
      <Res x={323} y={203} />
      <Cap x={288} y={237} />
      <Cap x={408} y={237} />
      <Gnd x={373} y={203} r={180} />
      <Gnd x={563} y={246} />
      <Wire d="M502 262V296" c={RED} w={2} />
      <Dots at={[[288, 271], [408, 271], [373, 203]]} />
      <Dots at={[[219, 271]]} c="#999" r={6} />
      <T x={219} y={266} s="USB_5V" c={NET} />
      <T x={306} y={192} s="R16" />
      <T x={308} y={208} s="1K" c={NET} />
      <T x={262} y={224} s="C17" />
      <T x={289} y={260} s="10uF" c={NET} />
      <T x={430} y={231} s="C23" />
      <T x={434} y={251} s="10uF" c={NET} />
      <T x={432} y={270} s="U7" />
      <Chip x={433} y={296} w={138} h={86} left={["VIN", "LED1", "LED2", "LED3"]} right={["VOUT", "SW", "BAT", "KEY"]} />
      <T x={504} y={324} s="EP" c="#666" r={270} />
      <T x={434} y={394} s="IP5306" c={NET} />
      <Wire d="M152 310V297H358V331H419M152 352V366H238V383H341V366H419M279 327V314H351V349H419M211 297V310M211 352V366M279 370V383M323 314V327M323 370V383" />
      <Led x={152} y={331} />
      <Led x={211} y={331} r={180} />
      <Led x={279} y={349} />
      <Led x={323} y={349} r={180} />
      <Wire d="M172 345l14-14M178 335l6-12M184 340l14-16M190 325l6-10M292 364l10-14M296 350l6-12M300 358l14-18M306 345l4-12" c={RED} w={5} />
      <Dots at={[[211, 297], [211, 366], [323, 314], [279, 383], [323, 383]]} />
      <T x={134} y={387} s="LED1" />
      <T x={203} y={387} s="LED2" />
      <T x={262} y={405} s="LED3 LED4" />

      <Wire d="M585 314H587V289H811M879 289H1211V240M585 331H650M711 331H784V314M585 349H682V417H716V432M716 331V348M585 366H587V450M784 331V358M784 392V485H716V467M646 211H1024V228M972 211V228M972 262V289M1024 262V289" />
      <Res x={845} y={289} />
      <Wire d="M650 331q8-14 15 0q8-14 15 0q8-14 15 0q8-14 16 0" c={RED} w={3} />
      <Res x={716} y={382} r={90} />
      <Cap x={716} y={450} />
      <Cap x={784} y={375} />
      <Cap x={972} y={245} />
      <Cap x={1024} y={245} />
      <Gnd x={750} y={485} />
      <Gnd x={646} y={211} r={180} />
      <Vcc x={1211} y={242} s="+5V" />
      <Wire d="M905 289V300M905 328V345M963 289V300M963 345V358" />
      <Cap x={905} y={314} />
      <Led x={963} y={322} r={180} />
      <Gnd x={905} y={340} />
      <Gnd x={963} y={357} />
      <Dots at={[[716, 331], [784, 331], [716, 417], [750, 485], [905, 289], [963, 289], [972, 289], [1024, 289], [972, 211], [587, 434]]} />
      <Dots at={[[784, 314]]} c="#999" r={6} />
      <T x={651} y={318} s="L1" />
      <T x={681} y={318} s="1uH" c={NET} />
      <T x={783} y={311} s="VBAT" c={NET} />
      <T x={829} y={311} s="100r" c={NET} />
      <T x={829} y={276} s="L36" />
      <T x={733} y={378} s="R17" />
      <T x={733} y={396} s="0.5R" c={NET} />
      <T x={806} y={366} s="C25" />
      <T x={809} y={386} s="22uf" c={NET} />
      <T x={739} y={443} s="C26" />
      <T x={741} y={462} s="22uf" c={NET} />
      <T x={995} y={240} s="C18" />
      <T x={997} y={257} s="22uf" c={NET} />
      <T x={1046} y={240} s="C24" />
      <T x={1049} y={257} s="22uf" c={NET} />
      <T x={927} y={308} s="C27" />
      <T x={920} y={336} s="220uF" c={NET} />
      <T x={986} y={318} s="D1" />
      <T x={990} y={336} s="SMBJ5.0A" c={NET} />

      <Nets rows={[[365, 476, 416, "WKUP"]]} />
      <Res x={450} y={476} />
      <Npn x={503} y={476} />
      <Wire d="M519 454V434M519 500V515" />
      <Res x={553} y={434} />
      <Gnd x={519} y={510} />
      <Res x={587} y={485} r={90} />
      <T x={433} y={464} s="R20" />
      <T x={435} y={498} s="1K" c={NET} />
      <T x={536} y={421} s="R19" />
      <T x={536} y={456} s="4.7k" c={NET} />
      <T x={530} y={470} s="Q1" />
      <T x={528} y={488} s="S8050" c={NET} />
      <T x={604} y={483} s="R18" />
      <T x={605} y={498} s="10k" c={NET} />
      <T x={597} y={548} s="U3" />
      <Wire d="M588 519V606M622 535V606M588 572h10l8 6M604 572h18" c={RED} />
      <Wire d="M622 535V519H647V525" />
      <Gnd x={647} y={519} />
      <Open x={588} y={622} />
      <Open x={622} y={622} />

      <Wire d="M1117 314H1220V305H1418M1452 305H1657M1170 314V350M1170 382V442M1093 442H1318M1272 305V315M1272 372V390M1272 425V442M1314 305V408H1318M1400 305V357H1418M1452 357H1469M1469 305V425H1318M1504 305V420" />
      <Gnd x={1117} y={314} r={180} label={false} />
      <Cap x={1170} y={365} />
      <Cap x={1435} y={305} r={90} />
      <Cap x={1435} y={357} r={90} />
      <Res x={1272} y={340} r={90} />
      <Led x={1272} y={408} r={180} />
      <path d="M1260 414l12-15 12 15z" fill={RED} />
      <Wire d="M1254 404l-14-12M1250 392l-12-8" c={RED} />
      <Led x={1504} y={440} r={180} />
      <Gnd x={1504} y={474} />
      <Vcc x={1093} y={440} s="+5V" />
      <Vcc x={1657} y={303} />
      <Chip x={1332} y={391} w={120} h={68} left={["GND", "VOUT", "VIN"]} right={["", "OUT"]} />
      <Dots at={[[1170, 314], [1170, 442], [1272, 305], [1272, 442], [1314, 305], [1400, 305], [1469, 305], [1469, 357], [1469, 425], [1504, 305], [1400, 425]]} />
      <T x={1193} y={362} s="C29" />
      <T x={1163} y={386} s="100pF" c={NET} />
      <T x={1286} y={332} s="R22" />
      <T x={1289} y={353} s="4.7K" c={NET} />
      <T x={1237} y={455} s="LED5" />
      <T x={1426} y={285} s="C30" />
      <T x={1417} y={335} s="C28" />
      <T x={1418} y={387} s="100pF" c={NET} />
      <T x={1331} y={387} s="U11" />
      <T x={1331} y={473} s="AMS1117-3.3" c={NET} />
      <T x={1526} y={438} s="D2" />
      <T x={1528} y={455} s="SMBJ3.3A" c={NET} />

      <Frame x={673} y={844} w={258} h={42} c={RED} />
      {Array.from({ length: 14 }, (_, i) => (
        <g key={i}>
          <Wire d={`M${689 + i * 17.2} 886v34`} c={RED} w={2} />
          <T x={695 + i * 17.2} y={884} s={`${i + 1}`} c="#666" r={270} size={14} />
          {i > 1 && <Wire d={`M${689 + i * 17.2} 920v48`} />}
          {i > 1 && <circle cx={689 + i * 17.2} cy="972" r="5" fill="#888" />}
          {i > 1 && <T x={687 + i * 17.2} y={970} s={`K${i - 1}`} c={NET} r={270} size={15} />}
        </g>
      ))}
      <Wire d="M706 920V938H690V950" />
      <Vcc x={687} y={921} r={270} />
      <Gnd x={690} y={938} />
      <T x={938} y={855} s="H13" />
      <TestPoint x={742} y={1209} name="TP4" />
      <TestPoint x={913} y={1174} name="TP5" />
      <TestPoint x={1195} y={1226} name="TP6" />
    </g>
  );
}

function BottomBlock() {
  return (
    <g>
      <T x={307} y={131} s={"旋转编码器\u00a0 按键"} c="#111" size={76} />
      <Header x={573} y={178} n={4} name="H1" />
      <Wire d="M487 169V195H559M480 212H559" />
      <Gnd x={487} y={169} r={90} />
      <Vcc x={485} y={212} r={270} />
      <Nets rows={[[505, 229, 559, "ADC1"], [505, 246, 559, "ADC2"]]} />
      <Header x={564} y={306} n={4} name="H10" />
      <Wire d="M479 297V323H550M472 340H550" />
      <Gnd x={479} y={297} r={90} />
      <Vcc x={477} y={340} r={270} />
      <Nets rows={[[496, 357, 550, "ADC4"], [496, 374, 550, "ADC3"]]} />
      <Nets rows={[[1070, 178, 1125, ""]]} />
      <Frame x={1139} y={169} w={33} h={18} c={RED} />
      <T x={1054} y={174} s="NET11" c={NET} />
      <T x={1139} y={162} s="H14" />

      <Wire d="M836 264H934M916 264V298H932V310M966 264H1035M983 264V298H966V310M880 400H932V380M966 380V400H1020M949 400V430M1103 264H1115" />
      <Cap x={949} y={264} r={90} />
      <Dots at={[[916, 264], [983, 264]]} />
      <Frame x={920} y={318} w={60} h={59} c={RED} />
      <circle cx="949" cy="348" r="21" fill="none" stroke={RED} strokeWidth="4" />
      <Wire d="M903 349H920M980 349H997M932 308V318M966 308V318M932 377V390M949 377V400M966 377V390" c={RED} w={3} />
      <T x={949} y={353} s="SW1" a="middle" />
      <Open x={889} y={349} />
      <Open x={1009} y={349} />
      <Gnd x={840} y={264} r={90} />
      <Res x={1069} y={264} />
      <Vcc x={1112} y={264} r={90} />
      <Res x={846} y={400} />
      <Vcc x={812} y={400} r={270} />
      <Res x={1052} y={400} />
      <Vcc x={1088} y={400} r={90} />
      <Gnd x={949} y={427} />
      <T x={933} y={218} s="100nF" c={NET} />
      <T x={933} y={242} s="C14" />
      <T x={1052} y={252} s="R7" />
      <T x={1052} y={285} s="4.7K" c={NET} />
      <T x={1032} y={308} s="NET11" c={NET} r={270} />
      <T x={769} y={335} s="EC11E18244AU" c={NET} />
      <T x={829} y={390} s="R8" />
      <T x={829} y={422} s="4.7K" c={NET} />
      <T x={1035} y={390} s="R4" />
      <T x={1035} y={422} s="4.7K" c={NET} />
      <T x={912} y={486} s="ENCODER2" c={NET} r={270} />
      <T x={1005} y={486} s="ENCODER1" c={NET} r={270} />

      <Frame x={1231} y={204} w={403} h={308} />
      <T x={1239} y={255} s="BUZZER" c="#111" size={46} />
      <Wire d="M1454 280V271H1488M1522 271H1541V427H1514V440M1472 349V427H1498V440M1541 349H1592V340M1266 460V452H1404V415M1404 365V349" />
      <Cap x={1505} y={271} r={90} />
      <Gnd x={1454} y={272} />
      <Res x={1437} y={349} />
      <Led x={1505} y={349} r={270} />
      <path d="M1494 337v24l18-12z" fill={RED} />
      <Wire d="M1472 349H1490M1520 349H1541" c={RED} w={3} />
      <Vcc x={1592} y={345} s="+5V" />
      <Nets rows={[[1241, 383, 1302, ""]]} />
      <T x={1241} y={380} s="BUZZER" c={NET} />
      <Res x={1334} y={383} />
      <Npn x={1388} y={387} />
      <Res x={1369} y={417} r={90} />
      <Gnd x={1266} y={452} />
      <Dots at={[[1472, 349], [1541, 349], [1369, 383], [1369, 452]]} />
      <path d="M1493 443h24v16l14 17h-52l14-17zM1493 459h24" fill="none" stroke={RED} strokeWidth="4" />
      <T x={1488} y={251} s="C2" />
      <T x={1488} y={302} s="10nF" c={NET} />
      <T x={1420} y={336} s="R25" />
      <T x={1420} y={372} s="0R" c={NET} />
      <T x={1488} y={330} s="D3" />
      <T x={1488} y={381} s="DSK14" c={NET} />
      <T x={1317} y={371} s="R24" />
      <T x={1317} y={405} s="4.7k" c={NET} />
      <T x={1412} y={395} s="S8050" c={NET} />
      <T x={1335} y={432} s="R23" />
      <T x={1335} y={449} s="10k" c={NET} />
      <T x={1540} y={456} s="BUZZER1" />
      <T x={1540} y={473} s="4000Hz" c={NET} />
    </g>
  );
}

const notes: [number, string][] = [
  [298, "1. oled i2c接口vcc和gnd排序反一下  方便直插"],
  [330, "2.max232   v+引脚错误"],
  [372, "3.ip5306   部分有错误   芯片烧毁"],
  [408, "3.单片机部分正常"],
  [441, "4.usb部分  5v供电正常"],
  [477, "4.蜂鸣器正常"],
];

const titleTexts: [number, number, string][] = [
  [1084, 635, "Schematic"], [1084, 690, "Page"], [1084, 722, "Drawed"], [1084, 755, "Reviewed"],
  [1836, 620, "Update Date"], [1836, 653, "Create Date"], [1836, 689, "Part Number"],
  [1492, 823, "VER"], [1622, 823, "SIZE"], [1837, 823, "PAGE"], [2050, 823, "OF"],
];

function NotesAndTitle() {
  return (
    <g>
      <Frame x={314} y={268} w={521} h={266} />
      {notes.map(([y, line]) => (
        <T key={y} x={357} y={y} s={line.replace(/ /g, "\u00a0")} c="#f00" size={30} />
      ))}
      <Wire
        d="M1068 594H2268V901H1068zM1224 594V832M1443 696V901M1819 594V696M1989 594V696M1581 799V901M1717 799V901M1819 628H2268M1068 661H2268M1068 696H2268M1068 730H1443M1068 765H1443M1068 799H2268M1068 832H2268"
        c="#a80a0a"
      />
      <g className="font-['Liberation_Mono',monospace] font-bold">
        {titleTexts.map(([x, y, s]) => (
          <T key={s} x={x} y={y} s={s} c="#a80a0a" size={21} />
        ))}
      </g>
      <g transform="translate(1110 846) scale(2 1.6)" fill="none" stroke="#5588ff" strokeWidth="3">
        <path d={CLOUD} />
      </g>
      <text x="1186" y="881" fill="#5588ff" fontSize="43" className="font-bold italic">嘉立创EDA</text>
    </g>
  );
}

/* the second transceiver, mostly scrolled out to the left */
function ClippedBlock() {
  return (
    <g>
      <Frame x={-300} y={408} w={485} h={350} />
      <Frame x={-100} y={476} w={148} h={51} />
      <T x={30} y={498} s="X" c="#555" />
      <T x={30} y={514} s="X" c="#555" />
      <Wire d="M30 596H168V606" />
      <Gnd x={65} y={578} r={180} label={false} />
      <Gnd x={168} y={597} label={false} />
      <Cap x={45} y={578} r={90} />
      <Nets rows={[[48, 613, 20, ""], [48, 630, 20, ""], [48, 647, 20, ""], [48, 664, 20, ""]]} />
      <T x={56} y={574} s="C33" />
      <T x={56} y={592} s="100nF" c={NET} />
      <T x={48} y={609} s="ARS232_RX" c={NET} />
      <T x={48} y={626} s="ARS232_TX" c={NET} />
      <T x={48} y={644} s="ATTL_RX" c={NET} />
      <T x={30} y={660} s="L_TX" c={NET} />
    </g>
  );
}

function At({ x, y, children }: Pos & { children: ReactNode }) {
  return <g transform={`translate(${x} ${y}) scale(0.3333)`}>{children}</g>;
}

const columns = [751, 973, 1195, 1417, 1639];
const sheetRows = [679, 915, 1150];
const letters = ["A", "B", "C", "D"];

function Canvas() {
  return (
    <svg className="size-full">
      <defs>
        <pattern id="grid" width="28.51" height="28.51" patternUnits="userSpaceOnUse" x="529.3" y="1386.7">
          <path d="M0 0.6H28.51M0.6 0V28.51" stroke="#e0e0e0" strokeWidth="1.2" />
        </pattern>
      </defs>
      <g transform="translate(-440 -143)">
        <rect x="0" y="0" width="6000" height="4000" fill="url(#grid)" />
        <path d="M529.5 1387V4000M0 1387.5H6000" stroke="#c4c4c4" />
        <g fill="none" stroke="#a80a0a" strokeWidth="1.5">
          <rect x="528.5" y="444" width="1333.5" height="942.5" />
          <rect x="534.5" y="450" width="1321.5" height="930.5" />
          {columns.map((x) => (
            <path key={x} d={`M${x} 444v6M${x} 1380v6`} />
          ))}
          {sheetRows.map((y) => (
            <path key={y} d={`M528 ${y}h6M1856 ${y}h6`} />
          ))}
        </g>
        <g fill="#c05050" fontSize="5" textAnchor="middle">
          {[640, 862, 1084, 1306, 1528, 1750].map((x, i) => (
            <text key={x} x={x} y="1385">{i + 1}</text>
          ))}
          {[561, 797, 1033, 1268].map((y, i) => (
            <text key={y} x="531.5" y={y + 2}>{letters[i]}</text>
          ))}
        </g>
        <At x={430} y={700}>
          <ClippedBlock />
          <UsbBlock />
          <UsartBlock />
          <McuBlock />
        </At>
        <At x={900} y={680}>
          <PowerBlock />
        </At>
        <At x={520} y={1210}>
          <BottomBlock />
        </At>
        <At x={1100} y={1080}>
          <NotesAndTitle />
        </At>
      </g>
    </svg>
  );
}

function Workspace() {
  return (
    <main className="flex min-w-0 flex-1 flex-col border-r border-[#ccc] bg-white">
      <div className="flex h-[45px] shrink-0 border-b border-[#ccc] bg-[#ddd]">
        <button aria-label="project folder" className="flex w-[51px] items-center justify-center border-r border-[#ccc] bg-[#efefef] pl-1">
          <FolderIcon />
        </button>
        <button className="flex w-[239px] items-center gap-2 bg-white pl-[14px] text-lg text-[#2f90ff]">
          <Icon name="page" color="text-[#3d9bff]" />
          P1.Schematic1
        </button>
      </div>
      <div className="min-h-0 flex-1 overflow-hidden">
        <Canvas />
      </div>
    </main>
  );
}

/* ---------- right side ---------- */

function Check({ label, checked = false }: { label: string; checked?: boolean }) {
  return (
    <span className="grid shrink-0">
      <input
        aria-label={label}
        type="checkbox"
        defaultChecked={checked}
        className="peer col-start-1 row-start-1 size-[21px] appearance-none rounded-[3px] border border-[#bbb] bg-white checked:border-[#1890ff] checked:bg-[#1890ff]"
      />
      <svg
        viewBox="0 0 21 21"
        className="pointer-events-none col-start-1 row-start-1 hidden size-[21px] peer-checked:block"
        fill="none"
        stroke="#fff"
        strokeWidth="2.5"
      >
        <path d="M5 12l4 5 7-12" />
      </svg>
    </span>
  );
}

function Section({ title }: { title: string }) {
  return (
    <h2 className="flex h-[37px] items-center gap-[6px] bg-[#ededed] pl-2 text-lg text-[#333]">
      <svg viewBox="0 0 12 12" className="size-3" fill="#c8c8c8">
        <path d="M12 0v12H0z" />
      </svg>
      {title}
    </h2>
  );
}

const FIELD = "min-w-0 rounded-sm border border-[#d9d9d9] text-lg disabled:bg-[#f0f0f0] disabled:text-[#bbb]";

type Prop = { label: string; value: string; on?: boolean; locked?: boolean };

const props: Prop[] = [
  { label: "@创建日期", value: "2023-06-29", on: true, locked: true },
  { label: "@图页总数", value: "1", on: true, locked: true },
  { label: "@图页名称", value: "P1", on: true, locked: true },
  { label: "@图页编号", value: "1", on: true, locked: true },
  { label: "@工程名称", value: "remote t", on: true, locked: true },
  { label: "@原理图名称", value: "Schematic1", on: true, locked: true },
  { label: "@更新日期", value: "2023-10-07", on: true, locked: true },
  { label: "公司", value: "嘉立创EDA", on: true },
  { label: "器件", value: "Sheet-Symbol_A4" },
  { label: "绘制", value: "", on: true },
  { label: "封装", value: "" },
  { label: "图页尺寸", value: "A4", on: true },
  { label: "料号", value: "", on: true },
  { label: "审阅", value: "", on: true },
  { label: "版本", value: "V1.0", on: true },
];

function PropRow({ prop }: { prop: Prop }) {
  return (
    <div className="flex h-[39px] items-center">
      <div className="mb-[2px]">
        <Check label={`${prop.label} 选择`} />
      </div>
      <label htmlFor={prop.label} className="ml-1 w-[119px] whitespace-nowrap">
        {prop.label}
      </label>
      <Check label={`${prop.label} 显示`} checked={prop.on} />
      {prop.label === "封装" ? (
        <div className={`ml-[5px] flex h-[39px] flex-1 items-center pr-[18px] ${FIELD}`}>
          <input id={prop.label} className="h-full min-w-0 flex-1 pl-3" />
          <button aria-label="browse" className="pb-1 font-bold">···</button>
        </div>
      ) : (
        <input
          id={prop.label}
          defaultValue={prop.value}
          disabled={prop.locked}
          className={`ml-[5px] h-[39px] flex-1 pl-3 ${FIELD} ${prop.label === "器件" ? "text-[#3d9bff]" : ""}`}
        />
      )}
    </div>
  );
}

function PropertyPanel() {
  return (
    <section className={`flex w-[386px] shrink-0 flex-col bg-white text-lg leading-6 text-[#333] ${UI}`}>
      <div className="flex h-[45px] shrink-0 items-center pr-[30px] pb-[2px] pl-[14px]">
        <span className="flex-1">图页</span>
        <span className="mr-4">选中数量</span>
        <span>1</span>
      </div>
      <Section title="基础属性" />
      <div className="relative flex items-center py-3 pr-3 pl-9">
        <svg viewBox="0 0 18 9" className="absolute top-0 left-[155px] w-[18px]" fill="#c8c8c8">
          <path d="M0 0h18L9 9z" />
        </svg>
        <label htmlFor="name" className="w-[146px]">名称</label>
        <input id="name" defaultValue="P1" disabled className={`h-9 flex-1 pl-3 ${FIELD}`} />
      </div>
      <Section title="图纸" />
      <div className="flex flex-col gap-3 pt-[13px] pr-3 pb-3 pl-9">
        <div className="flex items-center">
          <label htmlFor="sheet" className="w-[145px]">图纸</label>
          <div className={`flex h-[39px] w-[121px] items-center pr-[14px] ${FIELD}`}>
            <input id="sheet" defaultValue="Sheet-Symbol_A4" className="h-full min-w-0 flex-1 pl-3" />
            <button aria-label="browse sheet" className="pb-1 pl-1 font-bold">···</button>
          </div>
          <button aria-label="edit" className="ml-3">
            <Icon name="pencil" />
          </button>
          <button aria-label="reload" className="ml-3">
            <Icon name="reload" />
          </button>
        </div>
        <div className="flex items-center">
          <label htmlFor="size" className="w-[145px]">图纸尺寸</label>
          <div className="grid flex-1 items-center">
            <select id="size" className={`col-start-1 row-start-1 h-9 appearance-none pl-[6px] ${FIELD}`}>
              <option>A2</option>
            </select>
            <div className="pointer-events-none col-start-1 row-start-1 mr-2 justify-self-end">
              <Icon name="down" size="size-5" />
            </div>
          </div>
        </div>
        <div className="flex items-center">
          <div className="flex flex-col gap-3">
            <div className="flex items-center">
              <label htmlFor="width" className="w-[145px]">图纸宽度</label>
              <input id="width" defaultValue="23.38inch" className={`h-[39px] w-[133px] pl-3 ${FIELD}`} />
            </div>
            <div className="flex items-center">
              <label htmlFor="height" className="w-[145px]">图纸高度</label>
              <input id="height" defaultValue="16.52inch" className={`h-[39px] w-[133px] pl-3 ${FIELD}`} />
            </div>
          </div>
          <button aria-label="lock ratio" className="ml-3">
            <Icon name="lock" />
          </button>
          <button aria-label="swap" className="ml-[6px]">
            <Icon name="swap" />
          </button>
        </div>
      </div>
      <Section title="更多属性" />
      <div className="flex flex-col gap-3 pt-3 pr-3 pl-[11px]">
        {props.map((prop) => (
          <PropRow key={prop.label} prop={prop} />
        ))}
      </div>
    </section>
  );
}

function RightTabs() {
  return (
    <div className={`flex flex-1 flex-col border-l border-[#ccc] bg-[#efefef] text-lg leading-[18px] ${SANS}`}>
      <div className="flex h-12 items-center justify-center">
        <Pin />
      </div>
      <button className="flex h-[108px] w-[35px] items-center justify-center border-t border-r border-[#ccc] bg-white font-bold text-[#1e90ff]">
        <span className="w-[18px]">属性</span>
      </button>
      <button className="flex h-[108px] w-[35px] items-center justify-center border-y border-r border-[#ccc] text-[#333]">
        <span className="w-[18px]">过滤</span>
      </button>
    </div>
  );
}

const stats = [
  ["S", "38%", "G", "0.05inch"],
  ["X", "1.15inch", "dX", "1.13inch"],
  ["Y", "14.2inch", "dY", "14.22inch"],
];

function Status() {
  return (
    <table className={`w-full shrink-0 table-fixed bg-[#f1f1f1] text-lg leading-6 text-[#333] ${UI}`}>
      <tbody>
        {stats.map(([a, av, b, bv]) => (
          <tr key={a} className="h-[39px] border-t border-[#ccc]">
            <th className="w-[53px] bg-[#eee] pr-2 text-right font-normal">{a}</th>
            <td className="w-[161px] pl-3">{av}</td>
            <th className="w-[53px] bg-[#eee] pr-2 text-right font-normal">{b}</th>
            <td className="pl-3">{bv}</td>
          </tr>
        ))}
      </tbody>
    </table>
  );
}

export default function App() {
  return (
    <div className={`flex h-screen flex-col overflow-hidden bg-white ${SANS}`}>
      <TitleBar />
      <Toolbar />
      <div className="flex min-h-0 flex-1">
        <LeftTabs />
        <ProjectPanel />
        <Splitter side="left" />
        <Workspace />
        <div className="w-[2px] shrink-0 bg-white" />
        <Splitter side="right" />
        <div className="flex w-[429px] shrink-0 flex-col">
          <div className="flex min-h-0 flex-1">
            <PropertyPanel />
            <RightTabs />
          </div>
          <Status />
        </div>
      </div>
      <div className="flex h-[6px] shrink-0 justify-center bg-[#d0d0d0] bg-[radial-gradient(#eee_1px,transparent_1px)] bg-[size:6px_6px]">
        <button aria-label="expand bottom panel" className="flex h-full w-[76px] items-end justify-center border-x border-t border-[#7a6f6f] bg-[#f0eeee]">
          <svg viewBox="0 0 8 4" className="w-2" fill="#6b6060">
            <path d="M0 4l4-4 4 4z" />
          </svg>
        </button>
      </div>
    </div>
  );
}
